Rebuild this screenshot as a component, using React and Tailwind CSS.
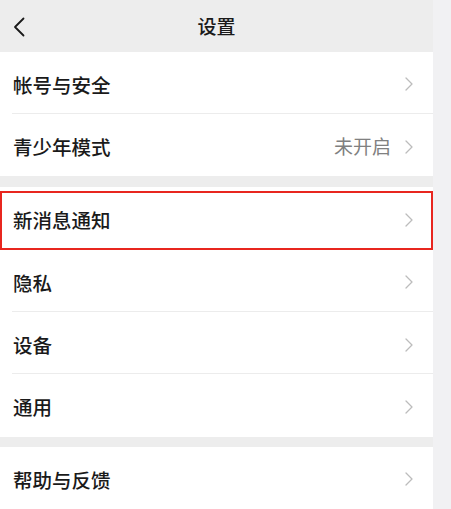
import React from 'react';

const Chevron = () => (
  <svg width="8" height="14" viewBox="0 0 8 14" fill="none" className="shrink-0">
    <path d="M1 1l6 6-6 6" stroke="#bcbcbc" strokeWidth="1.3" strokeLinecap="round" strokeLinejoin="round" />
  </svg>
);

const Row = ({ label, value, divider, highlight }) => (
  <div className="relative h-[63px] bg-white">
    <div className="flex h-full items-center pl-[13px] pr-[20px] pt-[3px]">
      <span className="flex-1 text-[19.5px] font-medium text-[#1a1a1a]">{label}</span>
      {value && <span className="mr-[14px] text-[19px] text-[#808080]">{value}</span>}
      <Chevron />
    </div>
    {divider && <div className="absolute bottom-0 left-[12px] right-0 h-px bg-[#ececec]" />}
    {highlight && <div className="absolute left-0 right-0 top-[4px] bottom-0 border-2 border-[#e8261f]" />}
  </div>
);

export default function App() {
  return (
    <div
      className="flex h-[509px] w-[451px] overflow-hidden bg-[#f1f1f3]"
      style={{ fontFamily: '"Noto Sans CJK SC", "Noto Sans", sans-serif' }}
    >
      <div className="flex w-[433px] flex-col bg-[#ededed]">
        <div className="relative flex h-[52px] items-center justify-center">
          <svg width="12" height="20" viewBox="0 0 12 20" fill="none" className="absolute left-[13px] top-[17px]">
            <path d="M10.5 1.5L2 10l8.5 8.5" stroke="#1a1a1a" strokeWidth="1.8" strokeLinecap="round" strokeLinejoin="round" />
          </svg>
          <span className="text-[19px] font-medium text-[#1a1a1a]">设置</span>
        </div>
        <Row label="帐号与安全" divider />
        <Row label="青少年模式" value="未开启" />
        <div className="h-[11px]" />
        <Row label="新消息通知" highlight />
        <Row label="隐私" divider />
        <Row label="设备" divider />
        <Row label="通用" />
        <div className="h-[10px]" />
        <Row label="帮助与反馈" />
      </div>
    </div>
  );
}
